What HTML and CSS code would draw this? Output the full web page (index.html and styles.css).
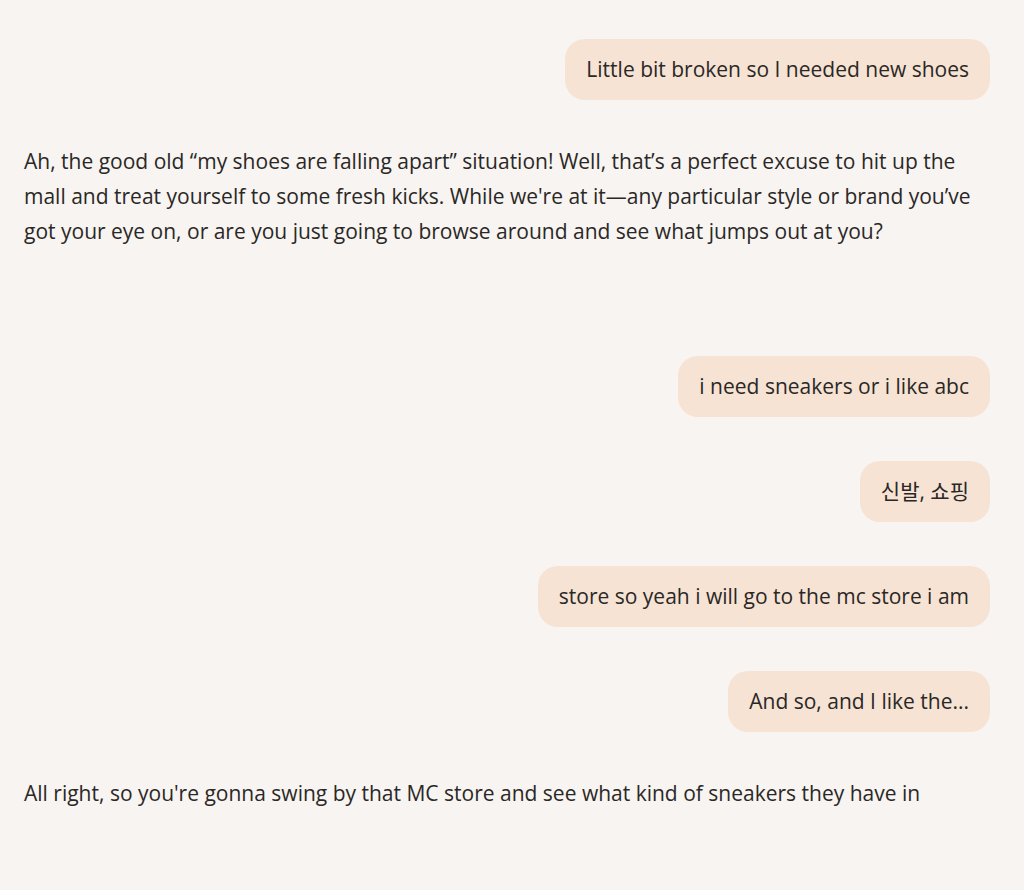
FILE: index.html
```html
<!DOCTYPE html>
<html lang="en">
<head>
<meta charset="utf-8">
<link rel="stylesheet" href="styles.css">
</head>
<body>
<main class="chat">
  <div class="msg user"><div class="bubble">Little bit broken so I needed new shoes</div></div>
  <p class="msg bot spaced">Ah, the good old “my shoes are falling apart” situation! Well, that’s a perfect excuse to hit up the mall and treat yourself to some fresh kicks. While we're at it—any particular style or brand you’ve got your eye on, or are you just going to browse around and see what jumps out at you?</p>
  <div class="msg user"><div class="bubble">i need sneakers or i like abc</div></div>
  <div class="msg user"><div class="bubble">신발, 쇼핑</div></div>
  <div class="msg user"><div class="bubble">store so yeah i will go to the mc store i am</div></div>
  <div class="msg user"><div class="bubble">And so, and I like the...</div></div>
  <p class="msg bot">All right, so you're gonna swing by that MC store and see what kind of sneakers they have in</p>
</main>
</body>
</html>
```
FILE: styles.css
```css
html, body {
  margin: 0;
  background: #f8f4f1;
}
body {
  font-family: "Open Sans", "Noto Sans CJK KR", sans-serif;
  font-size: 21px;
  color: #2a2826;
  height: 890px;
  overflow: hidden;
}
.chat {
  display: flex;
  flex-direction: column;
  gap: 44px;
  padding: 39px 34px 0 24px;
}
.msg {
  margin: 0;
  line-height: 35px;
}
.user {
  display: flex;
  justify-content: flex-end;
}
.bubble {
  background: #f6e3d4;
  border-radius: 20px;
  padding: 13px 21px;
  line-height: 35px;
}
.bot {
  margin-right: -10px;
}
.bot.spaced {
  margin-bottom: 63px;
}
```
